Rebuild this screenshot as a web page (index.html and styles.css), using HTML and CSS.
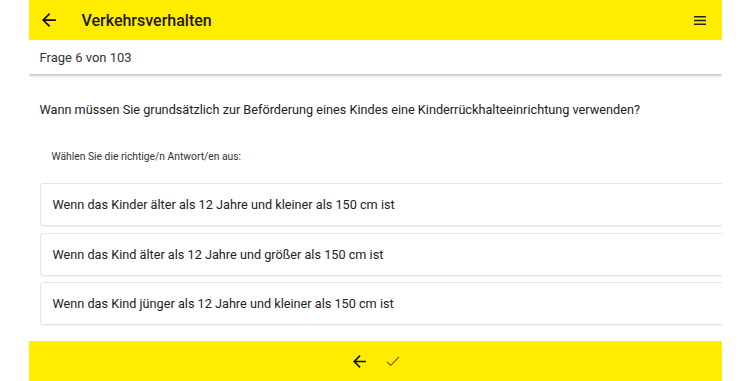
FILE: index.html
```html
<!DOCTYPE html>
<html lang="de">

<head>
  <meta charset="UTF-8">
  <meta name="viewport" content="width=device-width, initial-scale=1.0">
  <title>Verkehrsverhalten</title>
  <link rel="stylesheet" href="styles.css">
</head>

<body>
  <div class="app">
    <header class="topbar">
      <button class="icon-btn back">
        <svg width="14" height="14" viewBox="0 0 16 16"><path d="M16 7H3.83l5.59-5.59L8 0 0 8l8 8 1.41-1.41L3.83 9H16z" fill="#111"/></svg>
      </button>
      <h1 class="title">Verkehrsverhalten</h1>
      <button class="icon-btn menu">
        <svg width="12" height="9" viewBox="0 0 12 9"><path d="M0 0h12v1.6H0zM0 3.7h12v1.6H0zM0 7.4h12V9H0z" fill="#222"/></svg>
      </button>
    </header>

    <div class="subbar">Frage 6 von 103</div>

    <main class="content">
      <p class="question">Wann müssen Sie grundsätzlich zur Beförderung eines Kindes eine Kinderrückhalteeinrichtung verwenden?</p>
      <p class="hint">Wählen Sie die richtige/n Antwort/en aus:</p>

      <ul class="answers">
        <li class="answer">Wenn das Kinder älter als 12 Jahre und kleiner als 150 cm ist</li>
        <li class="answer">Wenn das Kind älter als 12 Jahre und größer als 150 cm ist</li>
        <li class="answer">Wenn das Kind jünger als 12 Jahre und kleiner als 150 cm ist</li>
      </ul>
    </main>

    <footer class="bottombar">
      <button class="icon-btn">
        <svg width="13" height="13" viewBox="0 0 16 16"><path d="M16 7H3.83l5.59-5.59L8 0 0 8l8 8 1.41-1.41L3.83 9H16z" fill="#111"/></svg>
      </button>
      <button class="icon-btn check">
        <svg width="14" height="11" viewBox="0 0 14 11"><path d="M1 5.8l3.6 3.6L13 1" fill="none" stroke="#7a7000" stroke-width="1.3"/></svg>
      </button>
    </footer>
  </div>
</body>

</html>
```

FILE: styles.css
```css
* {
  margin: 0;
  padding: 0;
  box-sizing: border-box;
}

body {
  background: #fff;
  font-family: Roboto, "Liberation Sans", sans-serif;
  color: #222;
}

.app {
  width: 693px;
  height: 381px;
  margin: 0 auto;
  display: flex;
  flex-direction: column;
  overflow: hidden;
}

.icon-btn {
  border: none;
  background: none;
  display: flex;
  align-items: center;
  justify-content: center;
}

.topbar {
  height: 40px;
  flex-shrink: 0;
  background-color: #ffec00;
  display: flex;
  align-items: center;
  padding: 0 16px 0 13px;
}

.topbar .back {
  width: 14px;
  margin-right: 26px;
}

.title {
  flex: 1;
  font-size: 16px;
  font-weight: 500;
  color: #1a1a1a;
}

.subbar {
  height: 34px;
  flex-shrink: 0;
  display: flex;
  align-items: center;
  padding-left: 11px;
  font-size: 13px;
  color: #333;
  box-shadow: 0 2px 2px rgba(0, 0, 0, 0.22);
  position: relative;
}

.content {
  flex: 1;
  padding: 28px 0 0 11px;
}

.question {
  font-size: 12.7px;
  color: #222;
  line-height: 16px;
}

.hint {
  font-size: 10.3px;
  color: #333;
  margin: 32px 0 0 12px;
}

.answers {
  list-style: none;
  margin-top: 20px;
  display: flex;
  flex-direction: column;
  gap: 6.5px;
  width: 700px;
}

.answer {
  height: 43px;
  border: 1px solid #e4e4e4;
  border-radius: 3px;
  box-shadow: 0 1px 1px rgba(0, 0, 0, 0.06);
  display: flex;
  align-items: center;
  padding-left: 12px;
  font-size: 12.7px;
  color: #222;
}

.bottombar {
  height: 40px;
  flex-shrink: 0;
  background-color: #ffec00;
  display: flex;
  justify-content: center;
  align-items: center;
  gap: 20px;
  padding-left: 2px;
}

.bottombar .icon-btn {
  width: 14px;
  height: 20px;
}
```
